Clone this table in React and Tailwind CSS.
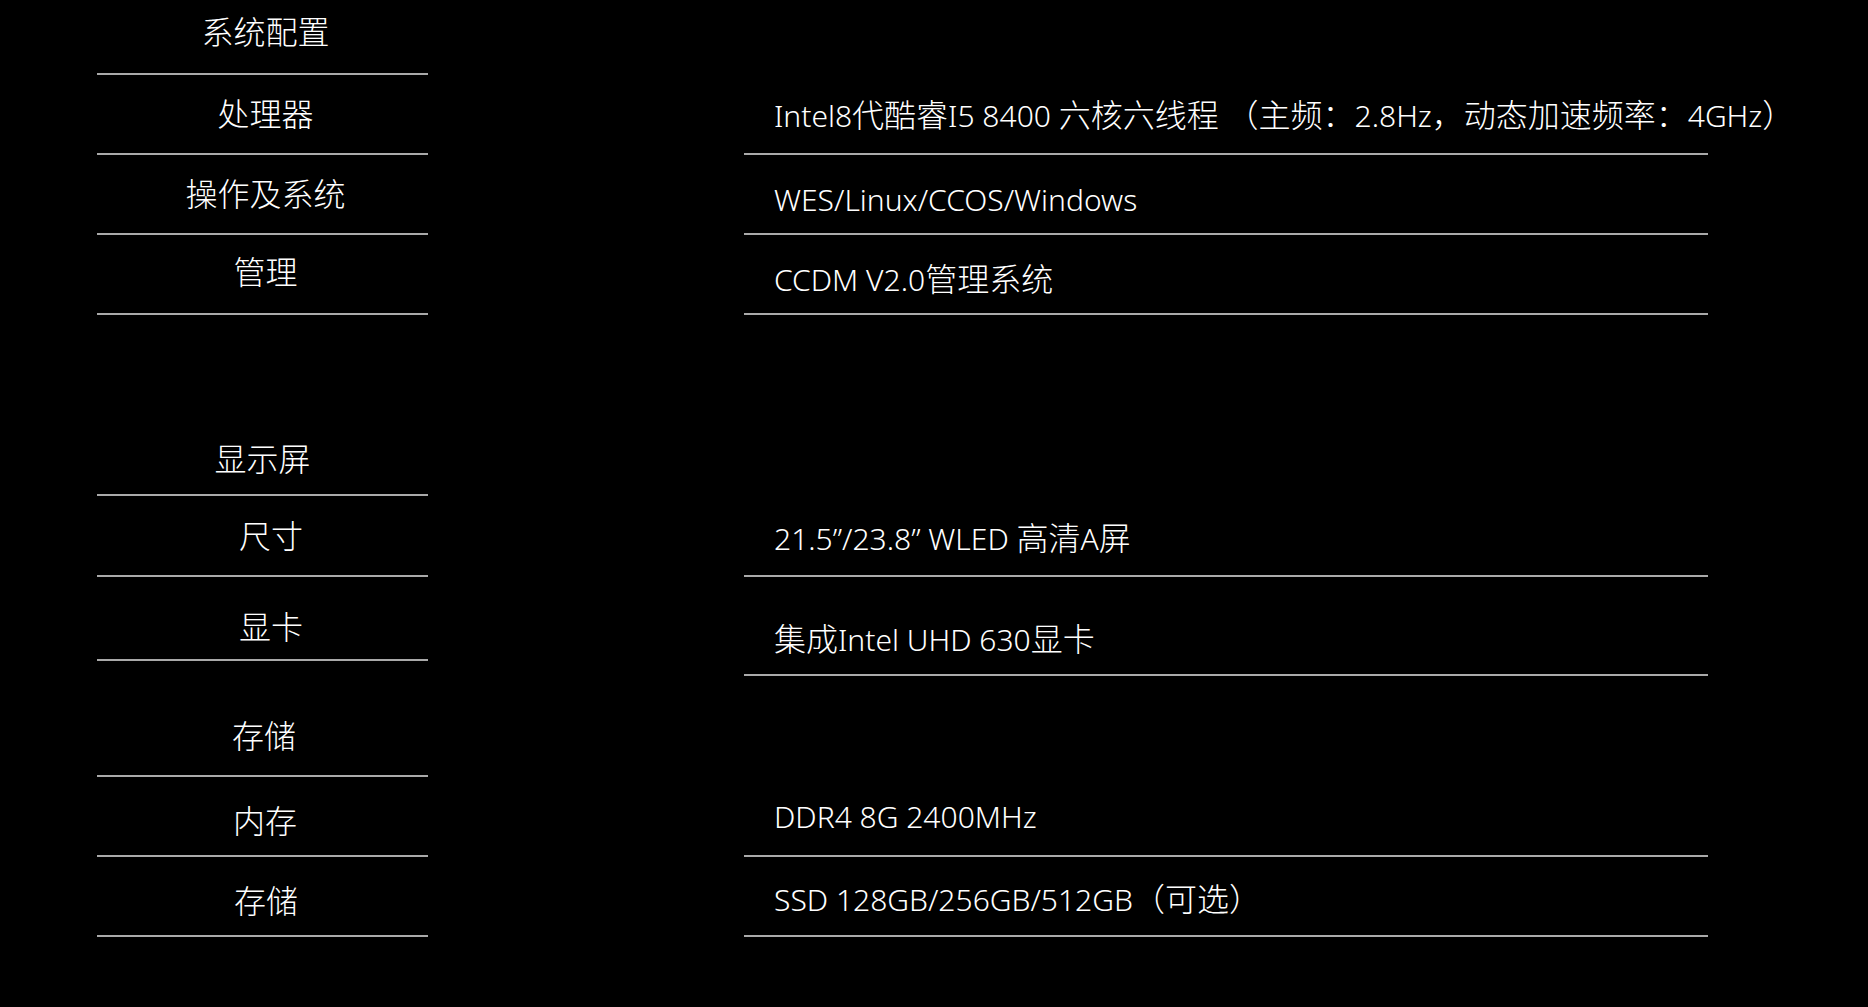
import React from "react";

const leftRows = [
  { text: "系统配置", cls: "h-[75px] pt-[14px] pl-[6px]" },
  { text: "处理器", cls: "h-[80px] pt-[21px] pl-[6px]" },
  { text: "操作及系统", cls: "h-[80px] pt-[21px] pl-[6px]" },
  { text: "管理", cls: "h-[80px] pt-[19px] pl-[6px]" },
  { text: "显示屏", cls: "mt-[101px] h-[80px] pt-[25px] pl-0" },
  { text: "尺寸", cls: "h-[81px] pt-[22px] pl-[17px]" },
  { text: "显卡", cls: "h-[84px] pt-[32px] pl-[17px]" },
  { text: "存储", cls: "h-[116px] pt-[57px] pl-[3px]" },
  { text: "内存", cls: "h-[80px] pt-[26px] pl-[5px]" },
  { text: "存储", cls: "h-[80px] pt-[26px] pl-[7px]" },
];

const rightRows = [
  { text: "Intel8代酷睿I5 8400 六核六线程 （主频：2.8Hz，动态加速频率：4GHz）", cls: "mt-[75px] h-[80px] pt-[22px]" },
  { text: "WES/Linux/CCOS/Windows", cls: "h-[80px] pt-[26px]" },
  { text: "CCDM V2.0管理系统", cls: "h-[80px] pt-[26px]" },
  { text: "21.5”/23.8” WLED 高清A屏", cls: "mt-[182px] h-[80px] pt-[23px]" },
  { text: "集成Intel UHD 630显卡", cls: "h-[99px] pt-[44px]" },
  { text: "DDR4 8G 2400MHz", cls: "mt-[101px] h-[80px] pt-[21px]" },
  { text: "SSD 128GB/256GB/512GB（可选）", cls: "h-[80px] pt-[24px]" },
];

const isWide = (ch) => ch.codePointAt(0) >= 0x2e80;

function splitRuns(text) {
  const runs = [];
  for (const ch of text) {
    const wide = isWide(ch);
    const last = runs[runs.length - 1];
    if (last && last.wide === wide) last.s += ch;
    else runs.push({ wide, s: ch });
  }
  return runs;
}

function MixedText({ text }) {
  return (
    <>
      {splitRuns(text).map((r, i) =>
        r.wide ? (
          <span key={i} className="text-[32px] font-['Noto_Sans_CJK_SC',sans-serif]">
            {r.s}
          </span>
        ) : (
          <span key={i} className="text-[30px] font-['Noto_Sans','Noto_Sans_CJK_SC',sans-serif]">
            {r.s}
          </span>
        )
      )}
    </>
  );
}

export default function App() {
  return (
    <div className="w-[1868px] h-[1007px] bg-black text-white overflow-hidden font-['Noto_Sans_CJK_SC',sans-serif] font-light">
      <div className="flex items-start">
        <div className="ml-[97px] w-[331px] flex flex-col">
          {leftRows.map((r, i) => (
            <div key={i} className={`flex justify-center border-b-2 border-[#a9a9a9] ${r.cls}`}>
              <span className="text-[32px] leading-none">{r.text}</span>
            </div>
          ))}
        </div>
        <div className="ml-[316px] w-[964px] flex flex-col">
          {rightRows.map((r, i) => (
            <div
              key={i}
              className={`border-b-2 border-[#a9a9a9] pl-[30px] whitespace-nowrap text-[32px] leading-none ${r.cls}`}
            >
              <MixedText text={r.text} />
            </div>
          ))}
        </div>
      </div>
    </div>
  );
}
